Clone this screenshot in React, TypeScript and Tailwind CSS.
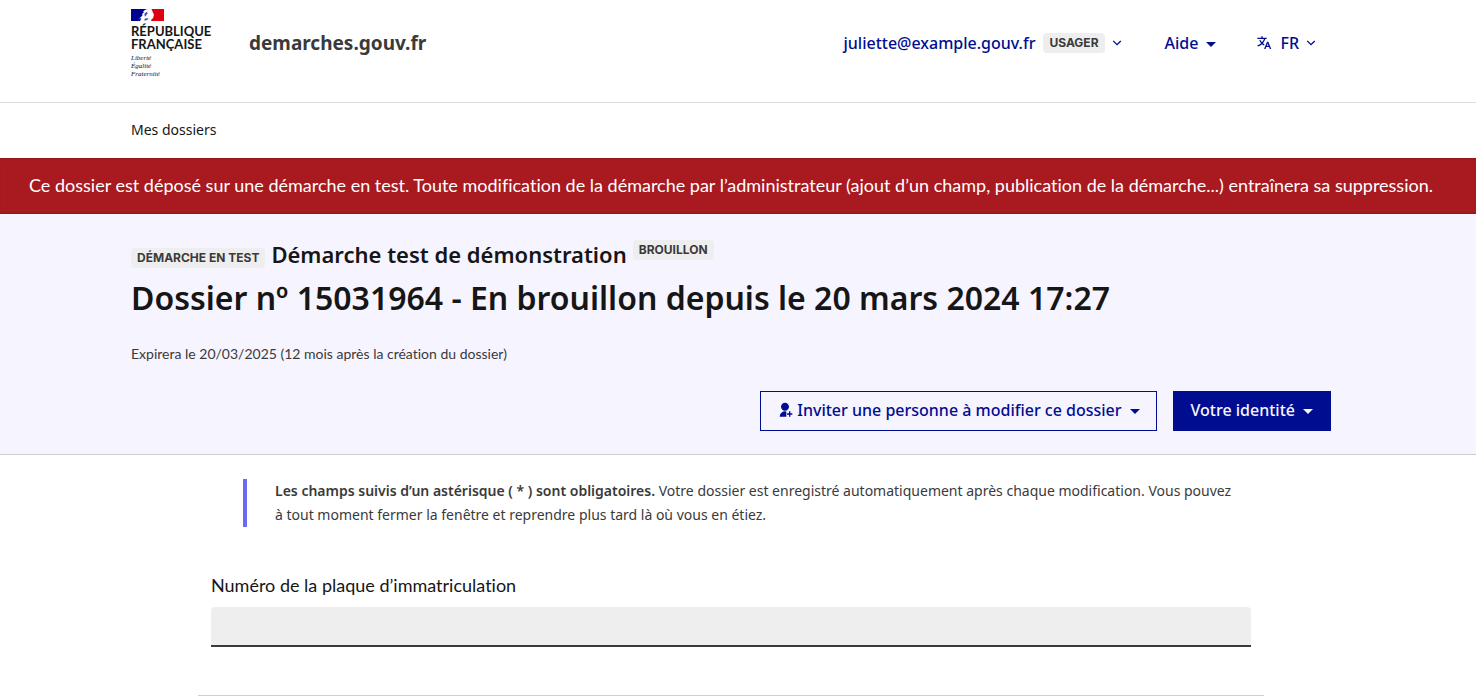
import type { ReactNode } from "react";

function Container({ children, className = "" }: { children: ReactNode; className?: string }) {
  return (
    <div className="pr-[14px]">
      <div className={"mx-auto w-full max-w-[1200px] " + className}>{children}</div>
    </div>
  );
}

function Badge({ children }: { children: ReactNode }) {
  return (
    <span className="inline-flex h-5 items-center rounded bg-[#eeeeee] px-1.5 font-['Inter','Noto_Sans',sans-serif] text-[12px] leading-5 font-bold text-[#3a3a3a] uppercase">
      {children}
    </span>
  );
}

function Chevron() {
  return (
    <svg viewBox="0 0 24 24" className="size-4" fill="currentColor" aria-hidden="true">
      <path d="m12 13.1 5-4.9 1.4 1.4-6.4 6.3-6.4-6.4L7 8.1l5 5z" />
    </svg>
  );
}

function Caret() {
  return (
    <svg viewBox="0 0 10 5" className="mt-0.5 h-[5px] w-[10px]" fill="currentColor" aria-hidden="true">
      <path d="M0 0h10L5 5z" />
    </svg>
  );
}

function TranslateIcon() {
  return (
    <svg viewBox="0 0 24 24" className="size-4" fill="currentColor" aria-hidden="true">
      <path d="m18.5 10 4.4 11h-2.155l-1.201-3h-4.09l-1.199 3h-2.154L16.5 10h2zM10 2v2h6v2h-1.968a18.222 18.222 0 0 1-3.62 6.301 14.864 14.864 0 0 0 2.336 1.707l-.751 1.878A17.015 17.015 0 0 1 9 13.725a16.676 16.676 0 0 1-6.201 3.548l-.536-1.929a14.7 14.7 0 0 0 5.327-3.042A18.078 18.078 0 0 1 4.767 8h2.24A16.032 16.032 0 0 0 9 10.877a16.165 16.165 0 0 0 2.91-4.876L2 6V4h6V2h2zm7.5 10.885L16.253 16h2.492L17.5 12.885z" />
    </svg>
  );
}

function UserAddIcon() {
  return (
    <svg viewBox="0 0 24 24" className="size-4" fill="currentColor" aria-hidden="true">
      <path d="M14 14.252V22H4a8 8 0 0 1 10-7.748zM12 13c-3.315 0-6-2.685-6-6s2.685-6 6-6 6 2.685 6 6-2.685 6-6 6zm6 4v-3h2v3h3v2h-3v3h-2v-3h-3v-2h3z" />
    </svg>
  );
}

function Flag() {
  return (
    <svg viewBox="0 0 33 12" className="h-3 w-[33px]" aria-hidden="true">
      <path d="M0 0h16l-2.500 1.200-1.500 1.800 1 .300-2.500 2.200 1.500.200-2 2.300-2 1.500 2.500-.200L9 12H0z" fill="#000091" />
      <path d="M20.500 0H33v12H20l.800-2.200 1.400-.600v-1.500l.600-.400-.200-.800.600-.500-1.100-2z" fill="#e1000f" />
      <path d="M14 4l2.500-1.500-.500 1.500 1 .500-1.500 1-.500 1.500-1.500.500.5-1.500-1 .2zM7 10.500l2-.700-1 1.200zM14 9.500l3-.300.5.800-2 1.200-2.500.300z" fill="#4a4fa8" />
    </svg>
  );
}

export default function App() {
  return (
    <div className="min-h-screen bg-white font-['Noto_Sans','Open_Sans',sans-serif] text-[#161616]">
      <header className="border-b border-[#dddddd]">
        <Container className="flex h-[102px] items-start">
          <div className="w-[118px] pt-[9px]">
            <Flag />
            <p className="pt-1 font-['Lato',sans-serif] text-[13px] leading-[13px] font-bold uppercase">
              République
              <br />
              Française
            </p>
            <p className="pt-[3px] font-['Liberation_Serif',serif] text-[7px] leading-[8px] italic">
              Liberté
              <br />
              Égalité
              <br />
              Fraternité
            </p>
          </div>
          <a href="#accueil" className="pt-[29px] text-[19px] leading-7 font-bold text-[#3a3a3a]">
            demarches.gouv.fr
          </a>
          <nav className="ml-auto flex items-center gap-10 pt-[31px] pr-[12px] leading-6 font-medium text-[#000d91]">
            <button type="button" className="flex items-center gap-2">
              juliette@example.gouv.fr <Badge>Usager</Badge>
              <span className="-ml-1"><Chevron /></span>
            </button>
            <button type="button" className="flex items-center gap-2">
              Aide <Caret />
            </button>
            <button type="button" className="flex items-center gap-2">
              <TranslateIcon /> FR
              <span className="-ml-1"><Chevron /></span>
            </button>
          </nav>
        </Container>
      </header>
      <nav>
        <Container className="flex h-[55px] items-start pt-[15px]">
          <a href="#dossiers" className="text-[14px] leading-6">Mes dossiers</a>
        </Container>
      </nav>
      <div
        role="alert"
        className="bg-[#a81a1f] pt-[15px] pr-[14px] pb-[17px] text-center font-['Lato','Noto_Sans',sans-serif] text-[18px] leading-6 text-white shadow-[inset_0_2px_2px_-1px_#96151a,inset_0_-2px_2px_-1px_#96151a] [font-variant-ligatures:none]"
      >
        Ce dossier est déposé sur une démarche en test. Toute modification de la démarche par l’administrateur (ajout d’un champ, publication de la démarche...) entraînera sa suppression.
      </div>
      <section className="border-b border-[#cecece] bg-[#f6f4ff] pt-6 pb-[23px]">
        <Container>
          <h1>
            <span className="flex h-8 items-start gap-1.5">
              <span className="pt-[10px] leading-none"><Badge>Démarche en test</Badge></span>
              <span className="text-[22px] leading-8 font-semibold">Démarche test de démonstration</span>
              <span className="pt-[2px] leading-none"><Badge>Brouillon</Badge></span>
            </span>
            <span className="block pt-2 text-[32px] leading-10 font-semibold">
              Dossier nº 15031964 - En brouillon depuis le 20 mars 2024 17:27
            </span>
          </h1>
          <p className="pt-6 font-['Lato','Noto_Sans',sans-serif] text-[14px] leading-6 text-[#3a3a3a] [font-variant-ligatures:none]">
            Expirera le 20/03/2025 (12 mois après la création du dossier)
          </p>
          <div className="flex justify-end gap-4 pt-[25px] leading-6 font-medium">
            <button type="button" className="flex h-10 items-center border border-[#000d91] px-4 pb-0.5 text-[#000d91]">
              <UserAddIcon />
              <span className="mr-2 ml-1">Inviter une personne à modifier ce dossier</span>
              <Caret />
            </button>
            <button type="button" className="flex h-10 items-center gap-2 bg-[#000d91] px-[18px] pb-0.5 text-[#f5f5fe]">
              Votre identité <Caret />
            </button>
          </div>
        </Container>
      </section>
      <main className="pt-6 pr-[14px]">
        <form className="mx-auto max-w-[1066px] px-[13px]">
          <p className="ml-8 border-l-4 border-[#6a6af4] pr-3 pl-7 text-[14px] leading-6 text-[#3a3a3a]">
            <strong className="font-semibold">Les champs suivis d’un astérisque ( * ) sont obligatoires.</strong> Votre dossier est enregistré automatiquement après chaque modification. Vous pouvez à tout moment fermer la fenêtre et reprendre plus tard là où vous en étiez.
          </p>
          <label
            htmlFor="plaque"
            className="block pt-[46px] font-['Lato','Noto_Sans',sans-serif] text-[18px] leading-6 [font-variant-ligatures:none]"
          >
            Numéro de la plaque d’immatriculation
          </label>
          <input
            id="plaque"
            type="text"
            className="mt-[10px] block h-10 w-full rounded-t border-b-2 border-[#3a3a3a] bg-[#eeeeee] px-4 outline-none"
          />
        </form>
        <hr className="mx-auto mt-12 max-w-[1066px] border-[#cecece]" />
      </main>
    </div>
  );
}
